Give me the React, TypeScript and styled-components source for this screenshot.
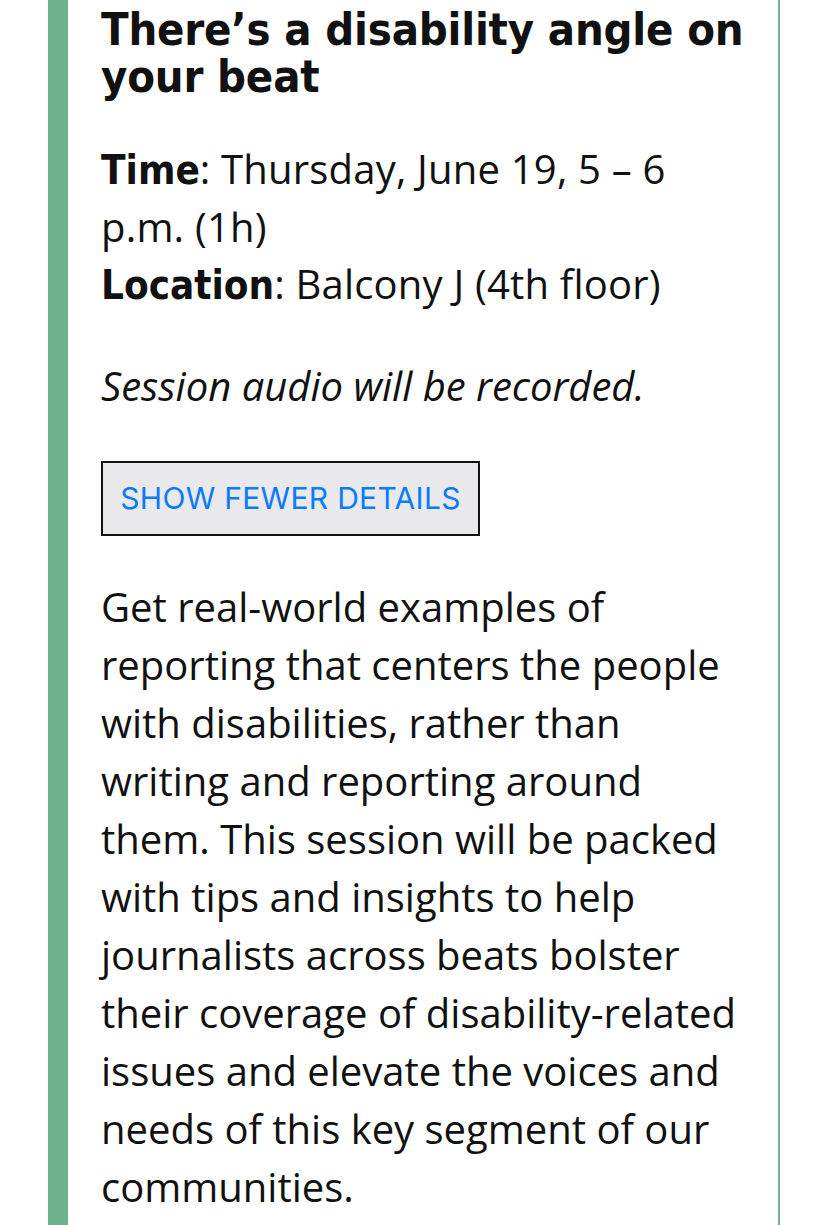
import React from "react";
import styled, { createGlobalStyle } from "styled-components";

const Global = createGlobalStyle`
  html, body { margin: 0; padding: 0; background: #ffffff; }
  body { font-family: "Open Sans", "Noto Sans", sans-serif; color: #111111; }
`;

const Card = styled.article`
  margin-left: 48px;
  width: 732px;
  box-sizing: border-box;
  border-left: 20px solid #6cb28a;
  border-right: 2px solid #6cb28a;
  padding: 6px 33px 20px 33px;
  min-height: 1225px;
`;

const Title = styled.h2`
  margin: 0;
  font-family: "DejaVu Sans Condensed", "DejaVu Sans", Roboto, sans-serif;
  font-weight: 700;
  font-size: 45px;
  line-height: 47px;
  letter-spacing: -0.2px;
  color: #111;
`;

const Meta = styled.p`
  margin: 40px 0 0;
  font-size: 40px;
  line-height: 57.5px;
  letter-spacing: 0.2px;
`;

const Label = styled.strong`
  font-family: "DejaVu Sans Condensed", "DejaVu Sans", sans-serif;
  font-weight: 700;
  line-height: 1;
  letter-spacing: 0;
`;

const Note = styled.p`
  margin: 44px 0 0;
  font-size: 40px;
  line-height: 58px;
  font-style: italic;
`;

const ToggleButton = styled.button`
  margin-top: 46px;
  display: block;
  box-sizing: border-box;
  width: 379px;
  height: 75px;
  border: 2px solid #111;
  border-radius: 0;
  background: #e9e9ec;
  color: #0a7bfa;
  font-family: Inter, Roboto, sans-serif;
  font-size: 30px;
  font-weight: 400;
  letter-spacing: 0.3px;
  padding: 0;
  text-align: center;
`;

const Description = styled.p`
  margin: 42px 0 0;
  font-size: 40px;
  line-height: 58px;
`;

export default function App() {
  return (
    <>
      <Global />
      <Card>
        <Title>There’s a disability angle on your beat</Title>
        <Meta>
          <Label>Time</Label>: Thursday, June 19, 5 – 6 p.m. (1h)
          <br />
          <Label>Location</Label>: Balcony J (4th floor)
        </Meta>
        <Note>Session audio will be recorded.</Note>
        <ToggleButton type="button">SHOW FEWER DETAILS</ToggleButton>
        <Description>
          Get real-world examples of reporting that centers the people with
          disabilities, rather than writing and reporting around them. This
          session will be packed with tips and insights to help journalists
          across beats bolster their coverage of disability-related issues and
          elevate the voices and needs of this key segment of our communities.
        </Description>
      </Card>
    </>
  );
}
